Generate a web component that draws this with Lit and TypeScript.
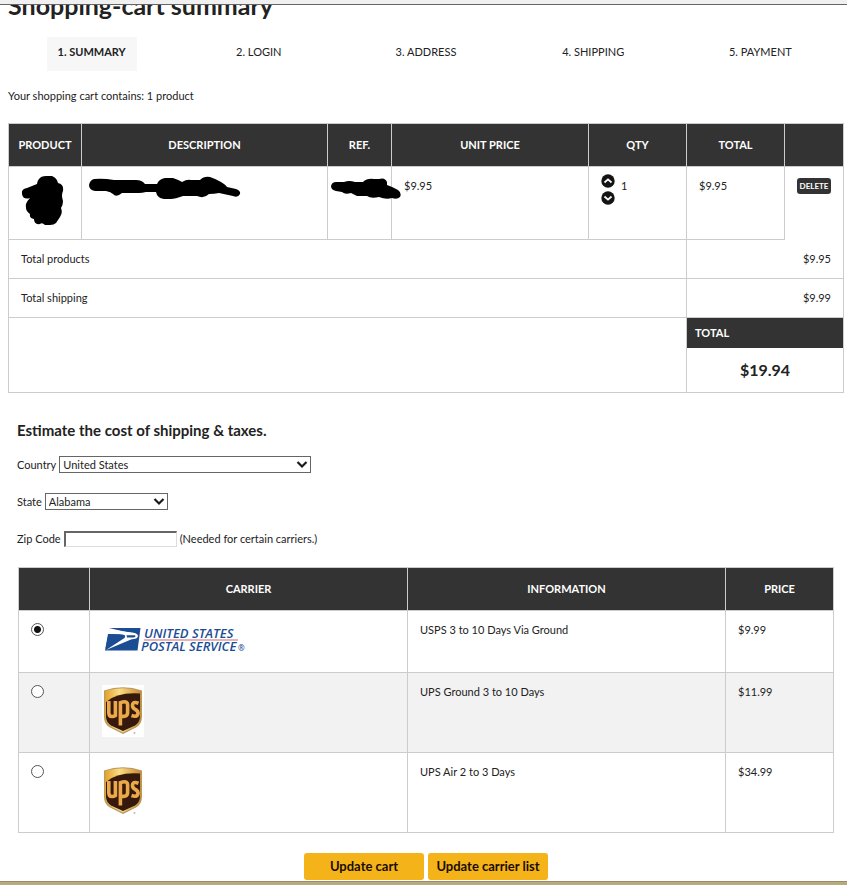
import { LitElement, html, css } from "lit";
import { customElement, state } from "lit/decorators.js";

const chevron = html`<svg class="chevron" width="12" height="9" viewBox="0 0 12 9" aria-hidden="true">
  <path d="M1.5 2 L6 6.5 L10.5 2" fill="none" stroke="#1a1a1a" stroke-width="2.2" />
</svg>`;

const roundArrow = (d: string) => html`<svg width="14" height="14" viewBox="0 0 14 14" aria-hidden="true">
  <circle cx="7" cy="7" r="6.7" fill="#141414" />
  <path d=${d} fill="none" stroke="#fff" stroke-width="1.7" />
</svg>`;

const productBlot = html`<svg class="blot" width="42" height="50" viewBox="0 0 42 50" aria-hidden="true">
  <path d="M17 3 Q19 0 24 0 H30 Q35 2 36 7 Q42 8 41 15 Q39 19 41 25 Q41 29 39 32 Q41 37 38 41 L34 47 Q32 49 28 49 H23 Q20 46 18 48 Q12 49 12 43 Q7 42 8 38 Q3 35 4 28 Q5 25 8 22 Q1 24 0 18 Q-1 13 5 12 L15 8 Q15 5 17 3 Z" />
</svg>`;

const descriptionBlot = html`<svg class="blot" width="152" height="24" viewBox="0 0 152 24" aria-hidden="true">
  <path d="M5 3 Q14 2 25 4 H47 Q53 4 56 8 H68 Q70 3 76 2 H84 Q90 4 93 6 Q98 3 102 4 H111 Q115 0 121 1 Q127 3 132 6 Q137 9 138 11 L147 13 Q152 15 151 18 Q149 22 144 20 L130 17 Q125 18 120 18 Q115 23 108 20 L94 20 Q86 23 82 23 H75 Q68 22 67 16 H57 Q53 17 50 17 H33 Q27 22 24 18 Q22 16 17 15 H6 Q0 14 0 9 Q1 4 5 3 Z" />
</svg>`;

const referenceBlot = html`<svg class="blot" width="70" height="22" viewBox="0 0 70 22" aria-hidden="true">
  <path d="M5 4 H13 Q18 2 24 4 H32 Q36 0 43 1 H48 Q54 -1 56 4 V7 Q62 9 67 12 Q71 15 69 19 Q66 22 61 20 Q55 22 48 19 Q40 21 36 18 H26 Q22 16 20 15 Q14 17 11 14 L5 13 Q0 12 0 8 Q1 4 5 4 Z" />
</svg>`;

const uspsLogo = html`<svg class="logo" width="146" height="38" viewBox="0 0 146 38" role="img" aria-label="United States Postal Service">
  <path d="M7 5 H38.500 L35.500 27.500 H3 L6 11 L22 11.500 L24.500 15 L33 15 Q36 13.500 33.500 11.500 Q31 10 24 9 Z" fill="#1b4d94" />
  <path d="M6.500 11 L20 11.500 Q25 12 22 15 L3.600 25.500 Z" fill="#1b4d94" />
  <path d="M6 6.300 L26 9 Q36 9.500 36 13 Q35.500 15.800 31.500 16 L29 16.600 L4 27 L22.500 15 Q24.500 12.300 21 11.500 L18 11 Z" fill="#fff" />
  <path d="M24.500 12.300 H33 Q34.500 14.200 31 14.500 H25 Z" fill="#1b4d94" />
  <text class="usps" x="42" y="14.500" font-size="13">UNITED STATES</text>
  <path d="M42 17 H136" stroke="#c96a70" stroke-width="1" />
  <text class="usps" x="39" y="28" font-size="13">POSTAL SERVICE</text>
  <text class="usps mark" x="136" y="28" font-size="8">®</text>
</svg>`;

const upsLogo = (id: string) => html`<svg class="logo" width="42" height="52" viewBox="0 0 42 52" role="img" aria-label="UPS">
  <defs>
    <linearGradient id=${id + "-gold"} x1="0" y1="0" x2="1" y2="0">
      <stop offset="0" stop-color="#e3a02c" />
      <stop offset="0.400" stop-color="#fbdc84" />
      <stop offset="1" stop-color="#c98a2c" />
    </linearGradient>
  </defs>
  <rect width="42" height="52" fill="#fff" />
  <path d="M2 5.500 Q21 -1 40 5.500 V32 Q40 39 34 42.500 L21 49 L8 42.500 Q2 39 2 32 Z" fill="#b49a68" />
  <path d="M3 6 Q21 0.500 39 6 V32 Q39 38 33.500 41.500 L21 47.500 L8.500 41.500 Q3 38 3 32 Z" fill=${`url(#${id}-gold)`} />
  <path d="M4 17 Q15 7 38 8.500 V31.500 Q38 37 33 40.500 L21 46 L9 40.500 Q4 37 4 31.500 Z" fill="#35190d" />
  <g fill="none" stroke="#eba94a" stroke-width="3.600">
    <path d="M6.800 16 V28 Q6.800 31.500 10 31.500 Q12 31.500 13.400 30.500 V16" />
    <path d="M18.400 40.500 V17.700 Q25.600 15 25.600 20 V27.500 Q25.600 32.500 18.400 31" />
    <path d="M36.500 18.200 Q30.500 16 30.500 20.500 Q30.500 23 33.200 24.300 Q36.500 26 36 29 Q35 32.500 29.500 30.500" />
  </g>
  <circle cx="32.500" cy="48" r="1" fill="#c9b7a8" />
</svg>`;

interface Carrier {
  id: string;
  logo: unknown;
  info: string;
  price: string;
}

@customElement("app-root")
export class AppRoot extends LitElement {
  @state() private quantity = 1;
  @state() private carrier = "usps";

  private carriers: Carrier[] = [
    { id: "usps", logo: uspsLogo, info: "USPS 3 to 10 Days Via Ground", price: "$9.99" },
    { id: "ups-ground", logo: upsLogo("ground"), info: "UPS Ground 3 to 10 Days", price: "$11.99" },
    { id: "ups-air", logo: upsLogo("air"), info: "UPS Air 2 to 3 Days", price: "$34.99" },
  ];

  static styles = css`
    :host {
      display: block;
      background: #fff;
      color: #222;
      font-family: "Trebuchet MS", Lato, sans-serif;
      font-size: 11px;
      line-height: 16px;
    }
    * { box-sizing: border-box; }
    .topbar { height: 5px; background: #f0f0f0; border-bottom: 1px solid #666; }
    .page { padding: 0 3px 0 8px; }
    .title-clip { display: flex; align-items: flex-end; height: 16px; overflow: hidden; }
    h1 { margin: 0; font-size: 25px; line-height: 32px; color: #222; }
    .steps { display: grid; grid-template-columns: repeat(5, 1fr); margin: 16px 0 17px; padding: 0; list-style: none; justify-items: center; }
    .steps li { height: 34px; line-height: 30px; padding: 0 11px; text-transform: uppercase; }
    .steps .current { background: #f7f7f7; font-weight: 700; }
    .intro { margin: 0 0 19px; }
    table { width: 100%; border-collapse: collapse; table-layout: fixed; }
    th, td { border: 1px solid #ccc; padding: 11px 12px; text-align: left; vertical-align: top; font-weight: 400; }
    thead th { height: 43px; padding: 0; background: #333; color: #fff; font-weight: 700; text-align: center; vertical-align: middle; }
    .c-product { width: 73px; }
    .c-ref { width: 64px; }
    .c-price { width: 197px; }
    .c-num { width: 98px; }
    .c-del { width: 59px; }
    .item { height: 73px; }
    .item td.redacted { padding: 9px 0 0 13px; }
    .item td.line { padding: 9px 0 0 7px; }
    .item td.ref { padding: 11px 0 0 3px; }
    .blot { display: block; position: relative; }
    .qty { display: flex; gap: 6px; }
    .arrows { display: flex; flex-direction: column; gap: 3px; }
    .item td.qty-cell { padding: 7px 12px; }
    .value { padding-top: 4px; }
    .round { display: block; width: 14px; height: 14px; padding: 0; border: 0; background: none; }
    .round svg { display: block; }
    .item td.last { border-bottom: 0; }
    .delete { display: block; height: 16px; width: 34px; padding: 0; border: 0; border-radius: 3px; background: #333; color: #fff; font: inherit; font-size: 8px; font-weight: 700; line-height: 16px; }
    .totals td, .totals th { height: 39px; }
    .totals td { text-align: right; }
    .totals .first { border-top: 0; }
    .grand { height: 75px; }
    .grand td.sum { padding: 0; }
    .sum-label { background: #333; color: #fff; font-weight: 700; height: 30px; line-height: 30px; padding: 0 8px; }
    .sum-value { font-size: 16px; font-weight: 700; line-height: 44px; text-align: center; }
    .estimate { padding: 27px 10px 0 9px; }
    h2 { margin: 0 0 16px; font-size: 15px; line-height: 20px; }
    .field { display: flex; align-items: center; gap: 3px; height: 17px; margin-bottom: 20px; }
    .select { display: grid; align-items: center; }
    .select > * { grid-area: 1 / 1; }
    .select select { appearance: none; width: 100%; height: 17px; padding: 0 3px; border: 1px solid #666; border-radius: 0; background: #fff; color: #222; font: inherit; line-height: 14px; }
    .country { width: 252px; }
    .state { width: 123px; }
    .chevron { justify-self: end; margin-right: 3px; pointer-events: none; }
    .zip { width: 113px; height: 16px; padding: 0 2px; border: 1px solid #ddd; border-top: 2px solid #666; border-left: 2px solid #666; border-radius: 0; font: inherit; }
    .carriers { margin: 0 0 20px 1px; width: calc(100% - 1px); }
    .c-radio { width: 71px; }
    .c-rate { width: 108px; }
    .carriers tbody tr:nth-child(even) { background: #f2f2f2; }
    .carriers tbody tr { height: 80px; }
    .carriers tbody tr:first-child { height: 62px; }
    .carriers .art { padding: 12px 12px 0; }
    .logo { display: block; }
    .usps { font-family: "Open Sans", sans-serif; font-weight: 600; font-style: italic; fill: #1b4d94; }
    .mark { font-style: normal; }
    .radio { appearance: none; display: block; width: 13px; height: 13px; margin: 1px 0 0; border: 1px solid #555; border-radius: 50%; background: #fff; }
    .radio:checked { background: radial-gradient(circle, #111 3px, #fff 4px); }
    .actions { display: flex; justify-content: center; gap: 4px; margin-bottom: 1px; }
    .update { width: 120px; height: 27px; padding: 0; border: 0; border-radius: 3px; background: #f5b31a; color: #1a0d00; font: inherit; font-size: 13px; font-weight: 700; line-height: 27px; }
    .footer { height: 4px; background: #b9a880; border-top: 1px solid #9c8c66; }
  `;

  render() {
    return html`
      <div class="topbar"></div>
      <main class="page">
        <div class="title-clip"><h1>Shopping-cart summary</h1></div>
        <ol class="steps">
          <li class="current">1. Summary</li>
          <li>2. Login</li>
          <li>3. Address</li>
          <li>4. Shipping</li>
          <li>5. Payment</li>
        </ol>
        <p class="intro">Your shopping cart contains: 1 product</p>
        <table class="cart">
          <colgroup>
            <col class="c-product" /><col /><col class="c-ref" /><col class="c-price" />
            <col class="c-num" /><col class="c-num" /><col class="c-del" />
          </colgroup>
          <thead>
            <tr>
              <th>PRODUCT</th><th>DESCRIPTION</th><th>REF.</th><th>UNIT PRICE</th>
              <th>QTY</th><th>TOTAL</th><th></th>
            </tr>
          </thead>
          <tbody>
            <tr class="item">
              <td class="redacted">${productBlot}</td>
              <td class="line">${descriptionBlot}</td>
              <td class="ref">${referenceBlot}</td>
              <td>$9.95</td>
              <td class="qty-cell">
                <div class="qty">
                  <div class="arrows">
                    <button class="round" aria-label="Increase" @click=${() => this.quantity++}>
                      ${roundArrow("M3.500 8.500 L7 5.300 L10.500 8.500")}
                    </button>
                    <button class="round" aria-label="Decrease" @click=${() => (this.quantity = Math.max(1, this.quantity - 1))}>
                      ${roundArrow("M3.500 5.500 L7 8.700 L10.500 5.500")}
                    </button>
                  </div>
                  <span class="value">${this.quantity}</span>
                </div>
              </td>
              <td>$9.95</td>
              <td class="last"><button class="delete">DELETE</button></td>
            </tr>
            <tr class="totals"><th colspan="5" scope="row">Total products</th><td class="first" colspan="2">$9.95</td></tr>
            <tr class="totals"><th colspan="5" scope="row">Total shipping</th><td colspan="2">$9.99</td></tr>
            <tr class="grand">
              <td colspan="5"></td>
              <td class="sum" colspan="2">
                <div class="sum-label">TOTAL</div>
                <div class="sum-value">$19.94</div>
              </td>
            </tr>
          </tbody>
        </table>

        <section class="estimate">
          <h2>Estimate the cost of shipping &amp; taxes.</h2>
          <div class="field">
            <label for="country">Country</label>
            <span class="select country"><select id="country"><option>United States</option></select>${chevron}</span>
          </div>
          <div class="field">
            <label for="state">State</label>
            <span class="select state"><select id="state"><option>Alabama</option></select>${chevron}</span>
          </div>
          <div class="field">
            <label for="zip">Zip Code</label>
            <input class="zip" id="zip" type="text" />
            <span>(Needed for certain carriers.)</span>
          </div>
          <table class="carriers">
            <colgroup><col class="c-radio" /><col /><col /><col class="c-rate" /></colgroup>
            <thead>
              <tr><th></th><th>CARRIER</th><th>INFORMATION</th><th>PRICE</th></tr>
            </thead>
            <tbody>
              ${this.carriers.map(
                (c) => html`<tr>
                  <td>
                    <input class="radio" type="radio" name="carrier" id=${c.id} .checked=${this.carrier === c.id}
                      @change=${() => (this.carrier = c.id)} />
                  </td>
                  <td class="art">${c.logo}</td>
                  <td><label for=${c.id}>${c.info}</label></td>
                  <td>${c.price}</td>
                </tr>`
              )}
            </tbody>
          </table>
        </section>
        <div class="actions">
          <button class="update">Update cart</button>
          <button class="update">Update carrier list</button>
        </div>
      </main>
      <div class="footer"></div>
    `;
  }
}
